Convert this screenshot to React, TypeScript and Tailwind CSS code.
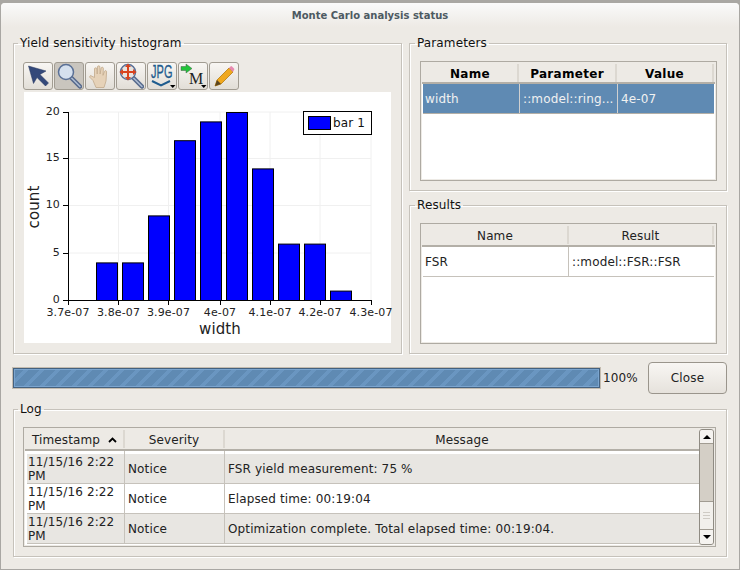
const bars = [4, 4, 9, 17, 19, 20, 14, 6, 6, 1];
const xTicks = [
  { x: 68, label: "3.7e-07" },
  { x: 118.5, label: "3.8e-07" },
  { x: 168.5, label: "3.9e-07" },
  { x: 220, label: "4e-07" },
  { x: 270, label: "4.1e-07" },
  { x: 320, label: "4.2e-07" },
  { x: 371, label: "4.3e-07" },
];
const yTicks = [
  { y: 300, label: "0" },
  { y: 253, label: "5" },
  { y: 205.5, label: "10" },
  { y: 158.5, label: "15" },
  { y: 112, label: "20" },
];

const Chart = () => (
  <svg width="367" height="251" viewBox="24 92 367 251" className="block bg-white overflow-visible" fontFamily="'DejaVu Sans', sans-serif">
    {xTicks.slice(1).map((t) => (
      <line key={t.x} x1={t.x} x2={t.x} y1="112" y2="300" stroke="#f0f0f0" />
    ))}
    {yTicks.slice(1).map((t) => (
      <line key={t.y} x1="68" x2="371" y1={t.y} y2={t.y} stroke="#f0f0f0" />
    ))}
    {bars.map((v, i) => (
      <rect key={i} x={96.5 + i * 26} y={300.5 - v * 9.4} width="21" height={v * 9.4} fill="#0000ff" stroke="#000" />
    ))}
    <path d="M68.5 112V300.5H371.5" fill="none" stroke="#000" />
    {yTicks.map((t) => (
      <g key={t.label}>
        <line x1="63" x2="68" y1={Math.floor(t.y) + 0.5} y2={Math.floor(t.y) + 0.5} stroke="#000" />
        <text x="60" y={t.y + 2.5} textAnchor="end" fontSize="11" fill="#222">
          {t.label}
        </text>
      </g>
    ))}
    {xTicks.map((t) => (
      <g key={t.x}>
        <line x1={Math.floor(t.x) + 0.5} x2={Math.floor(t.x) + 0.5} y1="300" y2="305" stroke="#000" />
        <text x={t.x} y="316" textAnchor="middle" fontSize="11" fill="#222">
          {t.label}
        </text>
      </g>
    ))}
    <text x="220" y="334" textAnchor="middle" fontSize="15" fill="#222">
      width
    </text>
    <text x="39" y="207" textAnchor="middle" fontSize="15" fill="#222" transform="rotate(-90 39 207)">
      count
    </text>
    <rect x="303.5" y="111.5" width="68" height="23" fill="#fff" stroke="#000" />
    <rect x="308.5" y="116.5" width="22" height="13" fill="#0000ff" stroke="#000" />
    <text x="333" y="127" fontSize="12" fill="#111">
      bar 1
    </text>
  </svg>
);

const ToolButton = ({ active, children }: { active?: boolean; children: React.ReactNode }) => (
  <div
    className={
      active
        ? "w-[30px] h-[28px] flex items-center justify-center rounded-[3px] border border-[#a19c92] bg-[#c9c5be]"
        : "w-[30px] h-[28px] flex items-center justify-center rounded-[3px] border border-[#a19c92] bg-linear-to-b from-[#f8f6f3] to-[#e2ded7]"
    }
  >
    {children}
  </div>
);

const Handle = () => (
  <>
    <path d="M15 14.500l9 9" stroke="#56698c" strokeWidth="4.500" strokeLinecap="round" />
    <path d="M15 14.500l9 9" stroke="#aebdd3" strokeWidth="1.500" strokeLinecap="round" />
  </>
);

const Toolbar = () => (
  <div className="flex gap-px h-[28px]">
    <ToolButton>
      <svg width="26" height="26" viewBox="0 0 26 26">
        <path d="M3.500 3l5 17.500 3.500-6 8.500 8.500 3-3-8.500-8.500 6-3.500z" fill="#34497a" stroke="#26365f" strokeWidth="0.5" />
      </svg>
    </ToolButton>
    <ToolButton active>
      <svg width="26" height="26" viewBox="0 0 26 26">
        <Handle />
        <circle cx="10" cy="9" r="7.500" fill="#d5e0ee" stroke="#5a7096" strokeWidth="1.500" />
      </svg>
    </ToolButton>
    <ToolButton>
      <svg width="26" height="26" viewBox="0 0 26 26">
        <path
          d="M9 24.500l-3-7-3.500-3.500 1-1.500 4 2V6a1.200 1.200 0 0 1 2.400 0l.3 5 .3-7a1.200 1.200 0 0 1 2.400 0l.2 7 1-6a1.200 1.200 0 0 1 2.300.3l-.4 7 1.500-4a1.100 1.100 0 0 1 2.100.6L19 18l-2 6.500z"
          fill="#e6d2b8"
          stroke="#c2a98c"
          strokeWidth="0.8"
        />
      </svg>
    </ToolButton>
    <ToolButton>
      <svg width="26" height="26" viewBox="0 0 26 26">
        <Handle />
        <circle cx="10" cy="9" r="7.500" fill="#e8e4e0" stroke="#5a7096" strokeWidth="1.500" />
        <path d="M10 .5l3 3.500h-2v4h4V6l3.500 3L15 12v-2h-4v4h2l-3 3.500L7 14h2v-4H5v2L1.500 9 5 6v2h4V4H7z" fill="#d9431e" />
      </svg>
    </ToolButton>
    <ToolButton>
      <svg width="28" height="26" viewBox="0 0 28 26">
        <text transform="translate(3 15) scale(1 1.6)" fontFamily="'Liberation Sans', sans-serif" fontSize="11" fill="#1f5c8e" stroke="#1f5c8e" strokeWidth="0.2">
          JPG
        </text>
        <path d="M4 18l9 4.500 9-4.500" fill="none" stroke="#1f5c8e" strokeWidth="2" />
        <path d="M22 22h5.500l-2.750 3z" fill="#000" />
      </svg>
    </ToolButton>
    <ToolButton>
      <svg width="28" height="26" viewBox="0 0 28 26">
        <path d="M2 3.500h5V1l6 4.500L7 10V7.500H2z" fill="#22c43a" stroke="#47604a" strokeWidth="0.5" />
        <text x="10" y="21" fontFamily="'Liberation Serif', serif" fontSize="16" fill="#222">
          M
        </text>
        <path d="M22 22h5.500l-2.750 3z" fill="#000" />
      </svg>
    </ToolButton>
    <ToolButton>
      <svg width="26" height="26" viewBox="0 0 26 26">
        <path d="M4 23l2-6L18 5l4 4L10 21z" fill="#f0a81e" stroke="#b57c10" strokeWidth="0.8" />
        <path d="M18 5l1.500-1.500a1 1 0 0 1 1.500 0L23 5.500a1 1 0 0 1 0 1.500L22 9z" fill="#e78ab0" />
        <path d="M4 23l2-6 4 4z" fill="#5a4520" />
      </svg>
    </ToolButton>
  </div>
);

const Group = ({ title, className, legendClass, children }: { title: string; className: string; legendClass: string; children: React.ReactNode }) => (
  <fieldset className={`border border-[#c6c2bb] shadow-[inset_1px_1px_0_#fff,1px_1px_0_#fff] ${className}`}>
    <legend className={`px-[2px] text-[12px] leading-[14px] text-[#111] ${legendClass}`}>{title}</legend>
    {children}
  </fieldset>
);

const HeaderCell = ({ className, children }: { className: string; children?: React.ReactNode }) => (
  <div className={`flex items-center justify-center h-[18px] pt-[2px] border-r-2 border-r-[#dcd8d1] ${className}`}>{children}</div>
);

const ParameterTable = () => (
  <div className="w-[297px] h-[120px] border border-[#aeaaa2] p-px bg-[#edeae5] flex flex-col">
    <div className="flex h-[21px] pt-px px-px border-b-2 border-b-[#b3afa7] font-bold text-[12px] tracking-[0.3px] text-[#000]">
      <HeaderCell className="w-[96px]">Name</HeaderCell>
      <HeaderCell className="w-[98px]">Parameter</HeaderCell>
      <HeaderCell className="w-[97px]">Value</HeaderCell>
    </div>
    <div className="flex-1 bg-white">
      <div className="mx-px flex h-[30px] items-center bg-[#5f8ab3] border-b border-b-[#b3afa7] text-[#f1f1f1]">
        <div className="w-[97px] h-full flex items-center pl-[2px] border-r border-r-[#d0d0d0]">width</div>
        <div className="w-[98px] h-full flex items-center pl-[3px] border-r border-r-[#d0d0d0] whitespace-nowrap overflow-hidden">::model::ring...</div>
        <div className="flex-1 flex items-center pl-[3px]">4e-07</div>
      </div>
    </div>
  </div>
);

const ResultTable = () => (
  <div className="w-[297px] h-[121px] border border-[#aeaaa2] p-px bg-[#edeae5] flex flex-col">
    <div className="flex h-[22px] pt-px px-px border-b-2 border-b-[#b3afa7] text-[12px] text-[#222]">
      <HeaderCell className="w-[146px]">Name</HeaderCell>
      <HeaderCell className="w-[145px]">Result</HeaderCell>
    </div>
    <div className="flex-1 bg-white">
      <div className="mx-px flex h-[30px] items-center border-b border-b-[#c6c2bb] text-[#222]">
        <div className="w-[146px] h-full flex items-center pl-[2px] border-r border-r-[#c6c2bb]">FSR</div>
        <div className="flex-1 flex items-center pl-[3px]">::model::FSR::FSR</div>
      </div>
    </div>
  </div>
);

const logRows = [
  { message: "FSR yield measurement: 75 %", stripe: true },
  { message: "Elapsed time: 00:19:04", stripe: false },
  { message: "Optimization complete. Total elapsed time: 00:19:04.", stripe: true },
];

const LogRow = ({ message, stripe }: { message: string; stripe: boolean }) => (
  <div className={stripe ? "flex h-[30px] border-b border-b-[#c6c2bb] bg-[#e8e6e2]" : "flex h-[30px] border-b border-b-[#c6c2bb] bg-white"}>
    <div className="w-[98px] pl-px pt-px leading-[14px] border-r border-r-[#c6c2bb]">
      11/15/16 2:22
      <br />
      PM
    </div>
    <div className="w-[100px] flex items-center pl-[3px] border-r border-r-[#c6c2bb]">Notice</div>
    <div className="flex-1 flex items-center pl-[3px] whitespace-nowrap">{message}</div>
  </div>
);

const Scrollbar = () => (
  <div className="w-[15px] flex flex-col rounded-[3px] border border-[#8f8b83] bg-[#d4cfc6]">
    <div className="h-[14px] flex items-center justify-center rounded-t-[2px] border-b border-b-[#a19c92] bg-[#f5f3f0]">
      <div className="w-0 h-0 border-x-[4px] border-x-transparent border-b-[4px] border-b-black" />
    </div>
    <div className="flex-1" />
    <div className="h-[29px] flex flex-col gap-[2px] items-center justify-center border-y border-y-[#a19c92] bg-[#f2f0ec]">
      <div className="w-[7px] h-px bg-[#cfcbc4]" />
      <div className="w-[7px] h-px bg-[#cfcbc4]" />
      <div className="w-[7px] h-px bg-[#cfcbc4]" />
    </div>
    <div className="h-[14px] flex items-center justify-center rounded-b-[2px] bg-[#f5f3f0]">
      <div className="w-0 h-0 border-x-[4px] border-x-transparent border-t-[4px] border-t-black" />
    </div>
  </div>
);

const LogTable = () => (
  <div className="h-[120px] border border-[#aeaaa2] p-px flex bg-[#edeae5]">
    <div className="flex-1 flex flex-col min-w-0">
      <div className="flex h-[22px] pt-px pl-px border-b-2 border-b-[#b3afa7] text-[#222]">
        <HeaderCell className="w-[99px] gap-[8px]">
          Timestamp
          <svg width="9" height="6" viewBox="0 0 9 6">
            <path d="M1 5l3.500-3.500L8 5" fill="none" stroke="#000" strokeWidth="1.800" />
          </svg>
        </HeaderCell>
        <HeaderCell className="w-[100px]">Severity</HeaderCell>
        <div className="flex-1 flex items-center justify-center h-[18px] pt-[2px]">Message</div>
      </div>
      <div className="pl-[2px] flex-1 flex flex-col bg-white text-[#222]">
        <div className="flex h-[3px]">
          <div className="w-[98px] border-r border-r-[#c6c2bb]" />
          <div className="w-[100px] border-r border-r-[#c6c2bb]" />
        </div>
        {logRows.map((row, i) => (
          <LogRow key={i} message={row.message} stripe={row.stripe} />
        ))}
      </div>
    </div>
    <Scrollbar />
  </div>
);

export default function App() {
  return (
    <div className="w-[740px] h-[570px] flex flex-col overflow-hidden bg-[#a9a7a3] pt-[3px] font-['DejaVu_Sans',sans-serif] text-[12px] tracking-[0.13px]">
      <div className="flex-1 flex flex-col mx-px mb-px rounded-t-[4px] bg-[#edeae5]">
        <div className="h-[24px] flex items-center justify-center rounded-t-[4px] bg-linear-to-b from-[#fafafa] to-[#edeae5] font-bold text-[10px] tracking-normal text-[#4d5a62]">
          Monte Carlo analysis status
        </div>
        <div className="flex-1 flex flex-col px-[12px] pt-[9px]">
          <div className="flex gap-[7px] h-[318px]">
            <Group title="Yield sensitivity histogram" legendClass="ml-[-5px]" className="w-[389px] pl-[9px] pt-[12px]">
              <Toolbar />
              <div className="mt-[2px] ml-px">
                <Chart />
              </div>
            </Group>
            <div className="w-[318px] flex flex-col gap-[7px]">
              <Group title="Parameters" legendClass="ml-[-5px]" className="h-[155px] pl-[10px] pt-[11px]">
                <ParameterTable />
              </Group>
              <Group title="Results" legendClass="ml-[-5px]" className="flex-1 pl-[10px] pt-[11px]">
                <ResultTable />
              </Group>
            </div>
          </div>
          <div className="flex items-center h-[32px] mt-[8px]">
            <div className="-ml-px w-[589px] h-[22px] border border-[#c4bcb0]">
              <div className="h-full border border-[#44617f] shadow-[inset_0_0_0_1px_#7ba5cf] bg-[repeating-linear-gradient(135deg,#5f8ab3_0,#5f8ab3_7.500px,#6a96c1_7.500px,#6a96c1_11.300px)]" />
            </div>
            <span className="ml-[2px] text-[#222]">100%</span>
            <button className="ml-auto w-[79px] h-[32px] rounded-[4px] border border-[#9a958c] bg-linear-to-b from-[#f8f6f3] to-[#e6e2dc] text-[#222]">
              Close
            </button>
          </div>
          <Group title="Log" legendClass="ml-[-5px]" className="h-[155px] mt-[8px] pl-[9px] pr-[10px] pt-[11px]">
            <LogTable />
          </Group>
        </div>
      </div>
    </div>
  );
}
